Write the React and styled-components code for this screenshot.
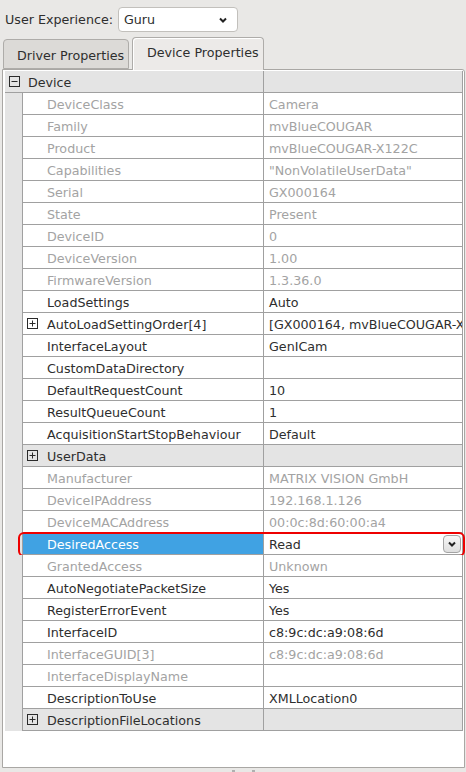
import React from "react";
import styled, { createGlobalStyle } from "styled-components";

const GlobalStyle = createGlobalStyle`
  html, body {
    margin: 0;
    padding: 0;
    background: #e9e8e6;
  }
  body {
    font-family: "DejaVu Sans", "Liberation Sans", sans-serif;
    font-size: 12.7px;
    color: #2e2e2e;
    width: 466px;
    height: 772px;
    overflow: hidden;
  }
`;

const Toolbar = styled.div`
  display: flex;
  align-items: center;
  gap: 5px;
  padding: 7px 0 0 5px;
  height: 25px;
`;

const Combo = styled.div`
  display: flex;
  align-items: center;
  justify-content: space-between;
  box-sizing: border-box;
  width: 120px;
  height: 25px;
  padding: 0 10px 0 5px;
  background: #fff;
  border: 1px solid #c2c0bc;
  border-radius: 4px;
`;

const TabBar = styled.div`
  display: flex;
  align-items: flex-end;
  gap: 3px;
  margin: 5px 0 0 3px;
  height: 32px;
`;

const Tab = styled.div`
  box-sizing: border-box;
  display: flex;
  align-items: center;
  white-space: nowrap;
  height: ${(p) => (p.$active ? "33px" : "30px")};
  margin-bottom: ${(p) => (p.$active ? "-1px" : "0")};
  padding: ${(p) => (p.$active ? "0 4px 4px 14px" : "2px 4px 0 13px")};
  width: ${(p) => (p.$active ? "132px" : "126px")};
  background: ${(p) => (p.$active ? "#eceae8" : "#dcdad7")};
  border: 1px solid #aeaca9;
  border-bottom: ${(p) => (p.$active ? "none" : "1px solid #aeaca9")};
  border-radius: 4px 4px 0 0;
  box-shadow: ${(p) => (p.$active ? "inset 1px 1px 0 #fff" : "none")};
  position: relative;
  z-index: ${(p) => (p.$active ? 2 : 1)};
`;

const Panel = styled.div`
  box-sizing: border-box;
  margin-left: 2px;
  width: 463px;
  height: 699px;
  padding: 1px 2px 0 2px;
  background: #fff;
  border: 1px solid #a9a7a4;
  border-radius: 0 3px 0 0;
  position: relative;
  z-index: 1;
`;

const Table = styled.div`
  display: flex;
  flex-direction: column;
  width: 458px;
`;

const Row = styled.div`
  display: grid;
  grid-template-columns: 17px 242px 1fr;
  height: 22px;
  position: relative;
`;

const Indent = styled.div`
  background: #e4e4e4;
`;

const cellBase = `
  box-sizing: border-box;
  display: flex;
  align-items: center;
  height: 22px;
  padding-top: 1px;
  border-bottom: 1px solid #a0a0a0;
  white-space: nowrap;
  overflow: hidden;
`;

const NameCell = styled.div`
  ${cellBase}
  grid-column: ${(p) => (p.$top ? "1 / 3" : "2")};
  padding-left: 4px;
  border-left: ${(p) => (p.$top ? "none" : "1px solid #a0a0a0")};
  border-right: 1px solid #a0a0a0;
  background: ${(p) =>
    p.$selected ? "#40a2e3" : p.$cat ? "#e4e4e4" : "#fff"};
  color: ${(p) => (p.$selected ? "#fff" : p.$disabled ? "#a3a3a3" : "#2e2e2e")};
`;

const ValueCell = styled.div`
  ${cellBase}
  justify-content: space-between;
  padding-left: 5px;
  padding-right: 1px;
  border-right: 1px solid #a0a0a0;
  background: ${(p) => (p.$cat ? "#e4e4e4" : "#fff")};
  color: ${(p) => (p.$disabled ? "#a3a3a3" : "#2e2e2e")};
`;

const Slot = styled.span`
  display: flex;
  align-items: center;
  margin-top: -1px;
  flex: 0 0 ${(p) => (p.$top ? "19px" : "20px")};
`;

const DropButton = styled.div`
  box-sizing: border-box;
  display: flex;
  align-items: center;
  justify-content: center;
  width: 18px;
  height: 18px;
  border: 1px solid #a4a4a4;
  border-radius: 4px;
  background: linear-gradient(#f7f7f7, #dedede);
`;

const Highlight = styled.div`
  position: absolute;
  left: 13px;
  right: -2px;
  top: -1px;
  bottom: -2px;
  border: 2px solid #ee0000;
  border-radius: 6px;
  pointer-events: none;
`;

const Grip = styled.div`
  display: flex;
  justify-content: center;
  gap: 17px;
  margin: 2px 0 0 20px;
  span {
    width: 3px;
    height: 2px;
    background: #b0b0b0;
  }
`;

const Chevron = ({ color = "#222" }) => (
  <svg width="8" height="6" viewBox="0 0 8 6">
    <polyline points="1,1.5 4,4.5 7,1.5" fill="none" stroke={color} strokeWidth="2" />
  </svg>
);

const Expander = ({ open }) => (
  <svg width="11" height="11" viewBox="0 0 11 11">
    <rect x="0.5" y="0.5" width="10" height="10" fill="none" stroke="#2a2a2a" />
    <line x1="2.5" y1="5.5" x2="8.5" y2="5.5" stroke="#2a2a2a" />
    {!open && <line x1="5.5" y1="2.5" x2="5.5" y2="8.5" stroke="#2a2a2a" />}
  </svg>
);

const rows = [
  { name: "Device", top: true, cat: true, open: true },
  { name: "DeviceClass", value: "Camera", disabled: true },
  { name: "Family", value: "mvBlueCOUGAR", disabled: true },
  { name: "Product", value: "mvBlueCOUGAR-X122C", disabled: true },
  { name: "Capabilities", value: "\"NonVolatileUserData\"", disabled: true },
  { name: "Serial", value: "GX000164", disabled: true },
  { name: "State", value: "Present", disabled: true },
  { name: "DeviceID", value: "0", disabled: true },
  { name: "DeviceVersion", value: "1.00", disabled: true },
  { name: "FirmwareVersion", value: "1.3.36.0", disabled: true },
  { name: "LoadSettings", value: "Auto" },
  { name: "AutoLoadSettingOrder[4]", value: "[GX000164, mvBlueCOUGAR-X", expander: true },
  { name: "InterfaceLayout", value: "GenICam" },
  { name: "CustomDataDirectory", value: "" },
  { name: "DefaultRequestCount", value: "10" },
  { name: "ResultQueueCount", value: "1" },
  { name: "AcquisitionStartStopBehaviour", value: "Default" },
  { name: "UserData", cat: true, expander: true },
  { name: "Manufacturer", value: "MATRIX VISION GmbH", disabled: true },
  { name: "DeviceIPAddress", value: "192.168.1.126", disabled: true },
  { name: "DeviceMACAddress", value: "00:0c:8d:60:00:a4", disabled: true },
  { name: "DesiredAccess", value: "Read", selected: true },
  { name: "GrantedAccess", value: "Unknown", disabled: true },
  { name: "AutoNegotiatePacketSize", value: "Yes" },
  { name: "RegisterErrorEvent", value: "Yes" },
  { name: "InterfaceID", value: "c8:9c:dc:a9:08:6d" },
  { name: "InterfaceGUID[3]", value: "c8:9c:dc:a9:08:6d", disabled: true },
  { name: "InterfaceDisplayName", value: "", disabled: true },
  { name: "DescriptionToUse", value: "XMLLocation0" },
  { name: "DescriptionFileLocations", cat: true, expander: true },
];

const PropertyRow = ({ row }) => (
  <Row>
    {!row.top && <Indent />}
    <NameCell $top={row.top} $cat={row.cat} $selected={row.selected} $disabled={row.disabled}>
      <Slot $top={row.top}>
        {(row.top || row.expander) && <Expander open={row.open} />}
      </Slot>
      {row.name}
    </NameCell>
    <ValueCell $cat={row.cat} $disabled={row.disabled}>
      <span>{row.value}</span>
      {row.selected && (
        <DropButton>
          <Chevron />
        </DropButton>
      )}
    </ValueCell>
    {row.selected && <Highlight />}
  </Row>
);

export default function App() {
  return (
    <>
      <GlobalStyle />
      <Toolbar>
        <span>User Experience:</span>
        <Combo>
          <span>Guru</span>
          <Chevron />
        </Combo>
      </Toolbar>
      <TabBar>
        <Tab>Driver Properties</Tab>
        <Tab $active>Device Properties</Tab>
      </TabBar>
      <Panel>
        <Table>
          {rows.map((r) => (
            <PropertyRow key={r.name} row={r} />
          ))}
        </Table>
      </Panel>
      <Grip>
        <span />
        <span />
      </Grip>
    </>
  );
}
